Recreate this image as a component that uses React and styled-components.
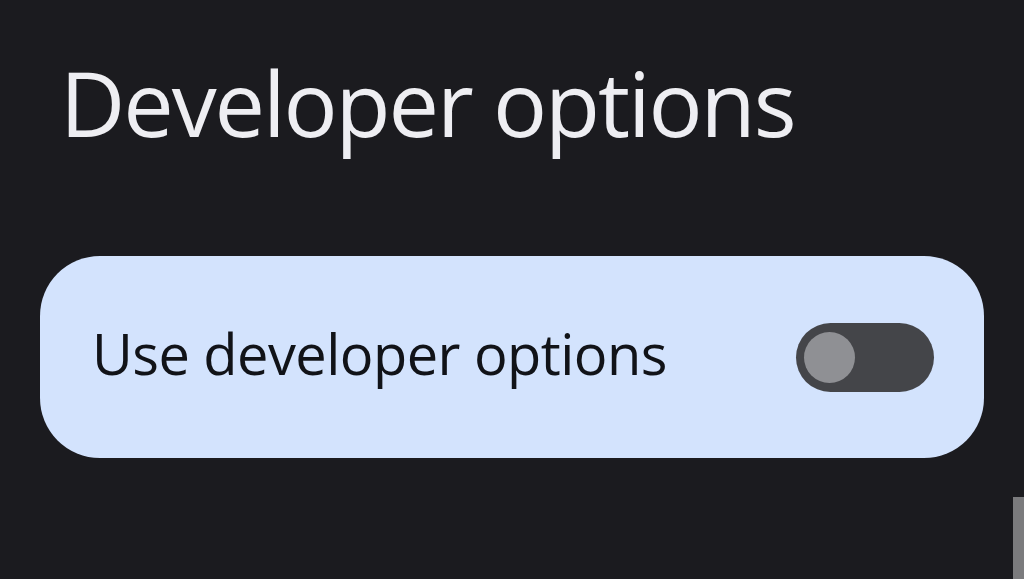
import React from 'react';
import styled, { createGlobalStyle } from 'styled-components';

const GlobalStyle = createGlobalStyle`
  html, body {
    margin: 0;
    padding: 0;
    background: #1b1b1f;
  }
  body {
    font-family: "Open Sans", "Noto Sans", sans-serif;
  }
`;

const Screen = styled.div`
  position: relative;
  width: 1024px;
  height: 579px;
  overflow: hidden;
  background: #1b1b1f;
  box-sizing: border-box;
  padding: 47px 40px 0 40px;
  display: flex;
  flex-direction: column;
`;

const Title = styled.h1`
  margin: 0 0 0 20px;
  font-family: "Open Sans", sans-serif;
  font-weight: 400;
  font-size: 90px;
  line-height: 110px;
  color: #eeeef2;
  letter-spacing: -2.1px;
`;

const Card = styled.div`
  margin-top: 99px;
  width: 944px;
  height: 202px;
  box-sizing: border-box;
  border-radius: 60px;
  background: #d3e3fd;
  display: flex;
  align-items: center;
  justify-content: space-between;
  padding: 0 50px 0 52px;
`;

const Label = styled.span`
  margin-bottom: 8px;
  font-family: "Open Sans", sans-serif;
  font-size: 56px;
  color: #111318;
  letter-spacing: -0.55px;
`;

const Track = styled.div`
  width: 138px;
  height: 69px;
  border-radius: 35px;
  background: #444549;
  display: flex;
  align-items: center;
  padding-left: 8px;
  box-sizing: border-box;
`;

const Thumb = styled.div`
  width: 51px;
  height: 51px;
  border-radius: 50%;
  background: #8f9094;
`;

const ScrollBar = styled.div`
  position: absolute;
  right: 0;
  bottom: 0;
  width: 11px;
  height: 82px;
  background: #7b7b7d;
`;

export default function App() {
  return (
    <>
      <GlobalStyle />
      <Screen>
        <Title>Developer options</Title>
        <Card>
          <Label>Use developer options</Label>
          <Track>
            <Thumb />
          </Track>
        </Card>
        <ScrollBar />
      </Screen>
    </>
  );
}
